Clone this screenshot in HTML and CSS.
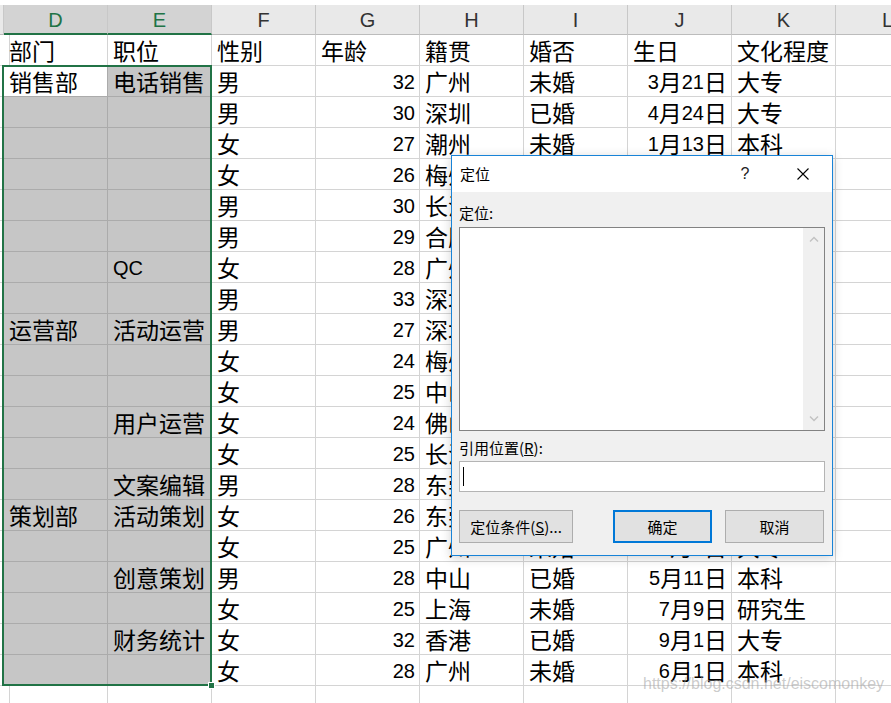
FILE: index.html
```html
<!DOCTYPE html>
<html lang="zh-CN">
<head>
<meta charset="utf-8">
<title>定位</title>
<link rel="stylesheet" href="styles.css">
</head>
<body>
<div class="sheet">
  <div class="hrow">
    <div class="h"></div><div class="h hs">D</div><div class="h hs">E</div><div class="h">F</div><div class="h">G</div><div class="h">H</div><div class="h">I</div><div class="h">J</div><div class="h">K</div><div class="h">L</div>
  </div>
  <div class="row"><div class="c"></div><div class="c">部门</div><div class="c">职位</div><div class="c">性别</div><div class="c">年龄</div><div class="c">籍贯</div><div class="c">婚否</div><div class="c">生日</div><div class="c">文化程度</div><div class="c"></div></div>
  <div class="row"><div class="c"></div><div class="c act">销售部</div><div class="c sel">电话销售</div><div class="c">男</div><div class="c r"><span class="n">32</span></div><div class="c">广州</div><div class="c">未婚</div><div class="c r"><span class="n">3</span>月<span class="n">21</span>日</div><div class="c">大专</div><div class="c"></div></div>
  <div class="row"><div class="c"></div><div class="c sel"></div><div class="c sel"></div><div class="c">男</div><div class="c r"><span class="n">30</span></div><div class="c">深圳</div><div class="c">已婚</div><div class="c r"><span class="n">4</span>月<span class="n">24</span>日</div><div class="c">大专</div><div class="c"></div></div>
  <div class="row"><div class="c"></div><div class="c sel"></div><div class="c sel"></div><div class="c">女</div><div class="c r"><span class="n">27</span></div><div class="c">潮州</div><div class="c">未婚</div><div class="c r"><span class="n">1</span>月<span class="n">13</span>日</div><div class="c">本科</div><div class="c"></div></div>
  <div class="row"><div class="c"></div><div class="c sel"></div><div class="c sel"></div><div class="c">女</div><div class="c r"><span class="n">26</span></div><div class="c">梅州</div><div class="c"></div><div class="c"></div><div class="c"></div><div class="c"></div></div>
  <div class="row"><div class="c"></div><div class="c sel"></div><div class="c sel"></div><div class="c">男</div><div class="c r"><span class="n">30</span></div><div class="c">长沙</div><div class="c"></div><div class="c"></div><div class="c"></div><div class="c"></div></div>
  <div class="row"><div class="c"></div><div class="c sel"></div><div class="c sel"></div><div class="c">男</div><div class="c r"><span class="n">29</span></div><div class="c">合肥</div><div class="c"></div><div class="c"></div><div class="c"></div><div class="c"></div></div>
  <div class="row"><div class="c"></div><div class="c sel"></div><div class="c sel"><span class="n">QC</span></div><div class="c">女</div><div class="c r"><span class="n">28</span></div><div class="c">广州</div><div class="c"></div><div class="c"></div><div class="c"></div><div class="c"></div></div>
  <div class="row"><div class="c"></div><div class="c sel"></div><div class="c sel"></div><div class="c">男</div><div class="c r"><span class="n">33</span></div><div class="c">深圳</div><div class="c"></div><div class="c"></div><div class="c"></div><div class="c"></div></div>
  <div class="row"><div class="c"></div><div class="c sel">运营部</div><div class="c sel">活动运营</div><div class="c">男</div><div class="c r"><span class="n">27</span></div><div class="c">深圳</div><div class="c"></div><div class="c"></div><div class="c"></div><div class="c"></div></div>
  <div class="row"><div class="c"></div><div class="c sel"></div><div class="c sel"></div><div class="c">女</div><div class="c r"><span class="n">24</span></div><div class="c">梅州</div><div class="c"></div><div class="c"></div><div class="c"></div><div class="c"></div></div>
  <div class="row"><div class="c"></div><div class="c sel"></div><div class="c sel"></div><div class="c">女</div><div class="c r"><span class="n">25</span></div><div class="c">中山</div><div class="c"></div><div class="c"></div><div class="c"></div><div class="c"></div></div>
  <div class="row"><div class="c"></div><div class="c sel"></div><div class="c sel">用户运营</div><div class="c">女</div><div class="c r"><span class="n">24</span></div><div class="c">佛山</div><div class="c"></div><div class="c"></div><div class="c"></div><div class="c"></div></div>
  <div class="row"><div class="c"></div><div class="c sel"></div><div class="c sel"></div><div class="c">女</div><div class="c r"><span class="n">25</span></div><div class="c">长沙</div><div class="c"></div><div class="c"></div><div class="c"></div><div class="c"></div></div>
  <div class="row"><div class="c"></div><div class="c sel"></div><div class="c sel">文案编辑</div><div class="c">男</div><div class="c r"><span class="n">28</span></div><div class="c">东莞</div><div class="c"></div><div class="c"></div><div class="c"></div><div class="c"></div></div>
  <div class="row"><div class="c"></div><div class="c sel">策划部</div><div class="c sel">活动策划</div><div class="c">女</div><div class="c r"><span class="n">26</span></div><div class="c">东莞</div><div class="c"></div><div class="c"></div><div class="c"></div><div class="c"></div></div>
  <div class="row"><div class="c"></div><div class="c sel"></div><div class="c sel"></div><div class="c">女</div><div class="c r"><span class="n">25</span></div><div class="c">广州</div><div class="c">未婚</div><div class="c r"><span class="n">1</span>月<span class="n">6</span>日</div><div class="c">大专</div><div class="c"></div></div>
  <div class="row"><div class="c"></div><div class="c sel"></div><div class="c sel">创意策划</div><div class="c">男</div><div class="c r"><span class="n">28</span></div><div class="c">中山</div><div class="c">已婚</div><div class="c r"><span class="n">5</span>月<span class="n">11</span>日</div><div class="c">本科</div><div class="c"></div></div>
  <div class="row"><div class="c"></div><div class="c sel"></div><div class="c sel"></div><div class="c">女</div><div class="c r"><span class="n">25</span></div><div class="c">上海</div><div class="c">未婚</div><div class="c r"><span class="n">7</span>月<span class="n">9</span>日</div><div class="c">研究生</div><div class="c"></div></div>
  <div class="row"><div class="c"></div><div class="c sel"></div><div class="c sel">财务统计</div><div class="c">女</div><div class="c r"><span class="n">32</span></div><div class="c">香港</div><div class="c">已婚</div><div class="c r"><span class="n">9</span>月<span class="n">1</span>日</div><div class="c">大专</div><div class="c"></div></div>
  <div class="row"><div class="c"></div><div class="c sel"></div><div class="c sel"></div><div class="c">女</div><div class="c r"><span class="n">28</span></div><div class="c">广州</div><div class="c">未婚</div><div class="c r"><span class="n">6</span>月<span class="n">1</span>日</div><div class="c">本科</div><div class="c"></div></div>
  <div class="row"><div class="c"></div><div class="c"></div><div class="c"></div><div class="c"></div><div class="c"></div><div class="c"></div><div class="c"></div><div class="c"></div><div class="c"></div><div class="c"></div></div>

  <div class="selbox"></div>
  <div class="handle"></div>

  <div class="dialog">
    <div class="dlg-title">
      <span class="dlg-name">定位</span>
      <span class="help">?</span>
      <span class="close"><svg width="12" height="12" viewBox="0 0 12 12"><path d="M0.5 0.5 L11.5 11.5 M11.5 0.5 L0.5 11.5" stroke="#000" stroke-width="1.1" fill="none"/></svg></span>
    </div>
    <div class="dlg-body">
      <div class="lbl lbl1">定位:</div>
      <div class="listbox">
        <div class="list-area"></div>
        <div class="vscroll">
          <svg width="10" height="6" viewBox="0 0 10 6"><path d="M1 5.5 L5 1.5 L9 5.5" stroke="#c2c2c2" stroke-width="1.4" fill="none"/></svg>
          <svg width="10" height="6" viewBox="0 0 10 6"><path d="M1 0.5 L5 4.5 L9 0.5" stroke="#c2c2c2" stroke-width="1.4" fill="none"/></svg>
        </div>
      </div>
      <div class="lbl lbl2">引用位置(<u>R</u>):</div>
      <div class="input"><span class="caret"></span></div>
      <div class="btns">
        <div class="btn btn-special">定位条件(<u>S</u>)...</div>
        <div class="btn btn-ok">确定</div>
        <div class="btn btn-cancel">取消</div>
      </div>
    </div>
  </div>

  <div class="watermark">https://blog.csdn.net/eiscomonkey</div>
</div>
</body>
</html>
```

FILE: styles.css
```css
html, body {
  margin: 0;
  padding: 0;
  background: #fff;
  overflow: hidden;
}

body {
  width: 891px;
  height: 703px;
  font-family: "Noto Sans CJK SC", "Noto Sans", sans-serif;
  color: #000;
}

.sheet {
  position: relative;
  width: 891px;
  height: 703px;
  padding-top: 5px;
  box-sizing: border-box;
  overflow: hidden;
  background: #fff;
}

.hrow,
.row {
  display: grid;
  grid-template-columns: 4px repeat(9, 104px);
}

.hrow {
  height: 30px;
}

.row {
  height: 31px;
}

.h {
  box-sizing: border-box;
  background: #e9e9e9;
  border-right: 1px solid #c8c8c8;
  border-bottom: 1px solid #bcbcbc;
  display: flex;
  align-items: center;
  justify-content: center;
  font-family: "Liberation Sans", sans-serif;
  font-size: 20px;
  color: #333;
  padding-top: 2px;
}

.h.hs {
  background: #d3d3d3;
  color: #217346;
  border-bottom: 2px solid #217346;
}

.c {
  box-sizing: border-box;
  border-right: 1px solid #d4d4d4;
  border-bottom: 1px solid #d4d4d4;
  display: flex;
  align-items: center;
  padding: 1px 4px 0 5px;
  font-size: 23px;
  line-height: 1;
  white-space: nowrap;
}

.c.r {
  justify-content: flex-end;
}

.c.sel {
  background: #c6c6c6;
  border-color: #ababab;
}

.c.act {
  background: #fff;
  border-right-color: #ababab;
  border-bottom-color: #ababab;
}

.n {
  font-family: "Liberation Sans", sans-serif;
  font-size: 20px;
}

.selbox {
  position: absolute;
  left: 2px;
  top: 65px;
  width: 210px;
  height: 621px;
  box-sizing: border-box;
  border: 2px solid #217346;
  pointer-events: none;
}

.handle {
  position: absolute;
  left: 208px;
  top: 682px;
  width: 5px;
  height: 5px;
  background: #217346;
  border: 1px solid #fff;
}

/* dialog */
.dialog {
  position: absolute;
  left: 451px;
  top: 155px;
  width: 382px;
  height: 401px;
  box-sizing: border-box;
  border: 1px solid #1883d7;
  background: #f0f0f0;
  display: flex;
  flex-direction: column;
  font-family: "Noto Sans CJK SC", sans-serif;
  font-size: 15px;
  line-height: 20px;
  box-shadow: 0 2px 10px rgba(0, 0, 0, 0.18);
}

.dlg-title {
  height: 37px;
  background: #fff;
  display: flex;
  align-items: center;
  padding: 0 6px 0 8px;
}

.dlg-name {
  flex: 1;
}

.help {
  width: 30px;
  margin-right: 20px;
  text-align: center;
  font-family: "Liberation Sans", sans-serif;
  font-size: 16px;
  color: #222;
}

.close {
  width: 46px;
  display: flex;
  align-items: center;
  justify-content: center;
}

.dlg-body {
  flex: 1;
  display: flex;
  flex-direction: column;
  padding: 0 7px 12px 7px;
}

.lbl {
  height: 20px;
}

.lbl1 {
  margin-top: 11px;
}

.lbl2 {
  margin-top: 7px;
}

.listbox {
  margin-top: 4px;
  height: 204px;
  box-sizing: border-box;
  border: 1px solid #828282;
  background: #fff;
  display: flex;
}

.list-area {
  flex: 1;
}

.vscroll {
  width: 21px;
  background: #f0f0f0;
  display: flex;
  flex-direction: column;
  align-items: center;
  justify-content: space-between;
  padding: 8px 0 8px;
}

.input {
  margin-top: 3px;
  height: 31px;
  box-sizing: border-box;
  border: 1px solid #b4b4b4;
  background: #fff;
  display: flex;
  align-items: center;
  padding-left: 3px;
}

.caret {
  width: 1px;
  height: 19px;
  background: #000;
}

.btns {
  margin-top: 18px;
  display: flex;
  padding-right: 1px;
}

.btn {
  box-sizing: border-box;
  height: 33px;
  background: #e1e1e1;
  border: 1px solid #adadad;
  display: flex;
  align-items: center;
  justify-content: center;
}

.btn-special {
  width: 114px;
}

.btn-ok {
  width: 99px;
  margin-left: auto;
  border: 2px solid #0078d7;
}

.btn-cancel {
  width: 99px;
  margin-left: 13px;
}

.watermark {
  position: absolute;
  left: 643px;
  top: 674px;
  font-family: "Liberation Sans", sans-serif;
  font-size: 16px;
  line-height: 20px;
  color: rgba(160, 160, 160, 0.55);
  white-space: nowrap;
}
```
